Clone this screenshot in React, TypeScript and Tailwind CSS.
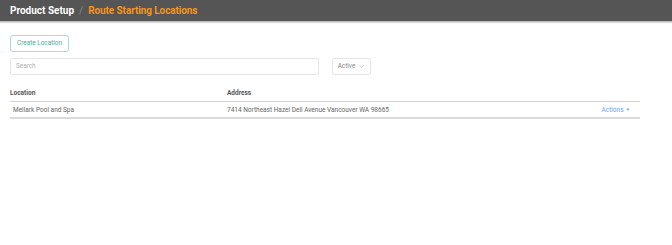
import { ChevronDown } from 'lucide-react';

export default function App() {
  return (
    <div className="w-[672px] h-[245px] bg-white font-['Roboto',sans-serif] overflow-hidden">
      {/* Top bar */}
      <div className="h-[22px] bg-[#555555] border-b border-[#bdbdbd] flex items-center px-[10px] gap-[5px] shadow-[0_1px_1px_rgba(0,0,0,0.15)]">
        <span className="text-[10px] font-bold text-white">Product Setup</span>
        <span className="text-[10px] text-[#8a8a8a]">/</span>
        <span className="text-[10px] font-bold text-[#f7941d] tracking-[-0.1px]">Route Starting Locations</span>
      </div>

      <div className="px-[10px] pt-[13px] flex">
        <div className="w-[630px]">
          <button
            type="button"
            className="h-[17px] w-[59px] rounded-[3px] border border-[#a6ddd6] text-[6.4px] text-[#52a89d] flex items-center justify-center"
          >
            Create Location
          </button>

          <div className="flex items-center mt-[6px]">
            <div className="w-[309px] h-[17px] border border-[#e6e6e6] rounded-[2px] flex items-center px-[5px]">
              <span className="text-[6.4px] text-[#b0b0b0]">Search</span>
            </div>
            <div className="ml-[13px] w-[39px] h-[17px] border border-[#e6e6e6] rounded-[2px] flex items-center justify-center gap-[3px]">
              <span className="text-[6.4px] text-[#888]">Active</span>
              <ChevronDown className="w-[7px] h-[7px] text-[#aaa]" strokeWidth={2} />
            </div>
          </div>

          {/* Table */}
          <div className="mt-[11px]">
            <div className="flex items-center h-[16px] border-b border-[#d4d4d4] text-[6.5px] font-bold text-[#555]">
              <span className="w-[217px]">Location</span>
              <span>Address</span>
            </div>
            <div className="flex items-center h-[17px] pt-[2px] border-b-2 border-[#dadada] text-[6.5px] text-[#666]">
              <span className="w-[217px] pl-[3px]">Mellark Pool and Spa</span>
              <span className="flex-1">7414 Northeast Hazel Dell Avenue Vancouver WA 98665</span>
              <span className="text-[#6aa3ea] pr-[10px] flex items-center gap-[2px]">
                Actions
                <span className="text-[4.5px]">▼</span>
              </span>
            </div>
          </div>
        </div>
      </div>
    </div>
  );
}
